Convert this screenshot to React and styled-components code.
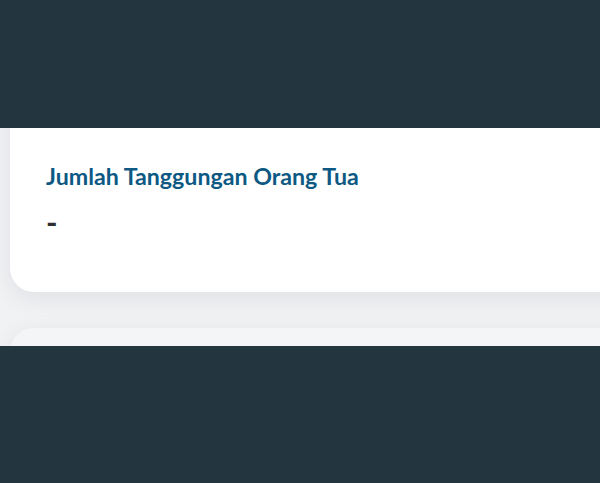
import React from "react"
import styled, { createGlobalStyle } from "styled-components"

const Global = createGlobalStyle`
  html, body { margin: 0; padding: 0; background: #233640; }
  body { font-family: Lato, "Noto Sans", sans-serif; }
`

const Page = styled.div`
  width: 600px;
  height: 483px;
  display: flex;
  flex-direction: column;
  overflow: hidden;
`

const Band = styled.div`
  background: #233640;
  height: ${p => p.h}px;
  flex-shrink: 0;
`

const Scroller = styled.div`
  height: 218px;
  flex-shrink: 0;
  background: #f1f2f4;
  overflow: hidden;
  display: flex;
  flex-direction: column;
  gap: 36px;
  padding-left: 10px;
`

const Card = styled.div`
  background: ${p => p.muted ? "#f4f5f7" : "#ffffff"};
  border-radius: 24px;
  margin-right: -40px;
  box-shadow: 0 6px 24px rgba(20, 30, 40, 0.08);
  flex-shrink: 0;
`

const InfoCard = styled(Card)`
  margin-top: -40px;
  padding: 73px 36px 55px;
  display: flex;
  flex-direction: column;
  gap: 16px;
`

const Title = styled.h3`
  margin: 0;
  font-family: Lato, "Noto Sans", sans-serif;
  font-weight: 700;
  font-size: 23.2px;
  line-height: 30px;
  color: #0d5983;
`

const Value = styled.div`
  font-family: Lato, "Noto Sans", sans-serif;
  font-weight: 700;
  font-size: 31px;
  line-height: 30px;
  color: #2f2f2f;
`

const NextCard = styled(Card)`
  height: 120px;
`

export default function App() {
  return (
    <Page>
      <Global />
      <Band h={128} />
      <Scroller>
        <InfoCard>
          <Title>Jumlah Tanggungan Orang Tua</Title>
          <Value>-</Value>
        </InfoCard>
        <NextCard muted />
      </Scroller>
      <Band h={137} />
    </Page>
  )
}
